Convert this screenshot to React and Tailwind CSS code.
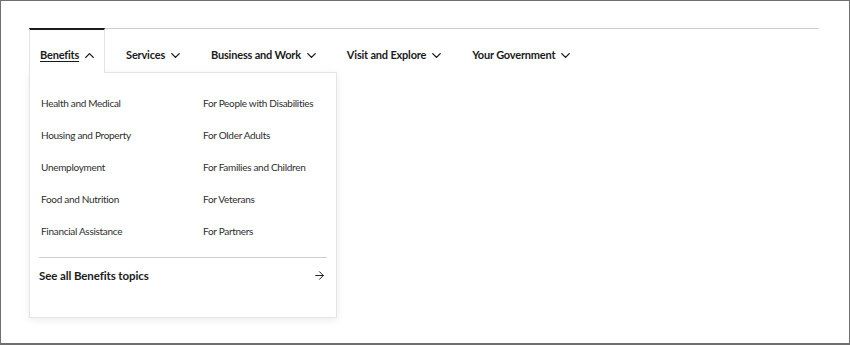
import React from "react";
import { ChevronDown, ChevronUp, ArrowRight } from "lucide-react";

const left = ["Health and Medical", "Housing and Property", "Unemployment", "Food and Nutrition", "Financial Assistance"];
const right = ["For People with Disabilities", "For Older Adults", "For Families and Children", "For Veterans", "For Partners"];
const navItems = ["Services", "Business and Work", "Visit and Explore", "Your Government"];

const App = () => {
  return (
    <div className="w-[850px] h-[345px] bg-white border border-[#6f6f6f] border-b-2 pt-[27px] pl-[28px] pr-[30px] text-[#1b1b1b] font-['Lato',sans-serif]">
      {/* nav bar */}
      <div className="relative border-t border-[#cfcfcf]">
        <ul className="flex items-start gap-[9px] -mt-px">
          <li className="relative h-[45px] pl-[10px] pr-[7px] mr-[2px] pt-[8px] flex items-center gap-[3px] bg-white border-t-2 border-[#1b1b1b] border-x border-x-[#e4e4e4] z-10">
            <span className="text-[11px] tracking-[-0.2px] font-bold underline underline-offset-2 decoration-1">Benefits</span>
            <ChevronUp size={15} strokeWidth={2.2} />
          </li>
          {navItems.map((item) => (
            <li key={item} className="h-[45px] pl-[10px] pr-[9px] pt-[10px] flex items-center gap-[3px]">
              <span className="text-[11px] tracking-[-0.2px] font-bold">{item}</span>
              <ChevronDown size={15} strokeWidth={2.2} />
            </li>
          ))}
        </ul>

        {/* dropdown panel */}
        <div className="absolute left-0 top-[43px] w-[308px] h-[246px] bg-white border border-[#e4e4e4] shadow-[0_2px_8px_rgba(0,0,0,0.08)] px-[9px] pt-[14px]">
          <div className="grid grid-cols-[164px_1fr]">
            <div className="flex flex-col">
              {left.map((t) => (
                <a key={t} className="h-[32px] flex items-center pl-[2px] text-[10px] tracking-[-0.3px] text-[#2e2e2e]">
                  {t}
                </a>
              ))}
            </div>
            <div className="flex flex-col">
              {right.map((t) => (
                <a key={t} className="h-[32px] flex items-center text-[10px] tracking-[-0.3px] text-[#2e2e2e] whitespace-nowrap">
                  {t}
                </a>
              ))}
            </div>
          </div>
          <div className="mt-[10px] border-t border-[#cfcfcf] flex items-center justify-between h-[36px] pr-[1px]">
            <span className="text-[11.5px] tracking-[-0.1px] font-bold">See all Benefits topics</span>
            <ArrowRight size={13} strokeWidth={1.8} />
          </div>
        </div>
      </div>
    </div>
  );
};

export default App;
